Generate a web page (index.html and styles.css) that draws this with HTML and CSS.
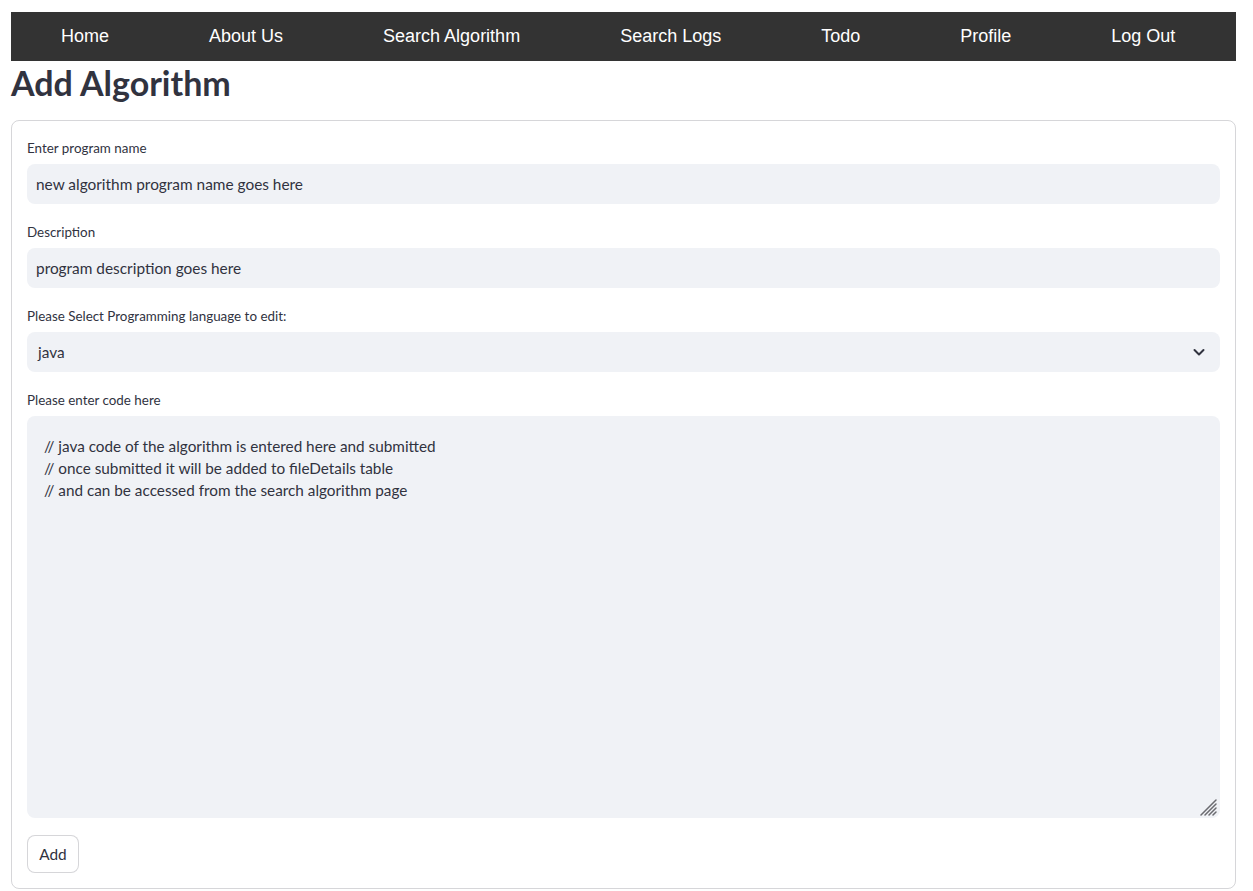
FILE: index.html
```html
<!DOCTYPE html>
<html lang="en">
<head>
<meta charset="utf-8">
<title>Add Algorithm</title>
<link rel="stylesheet" href="styles.css">
</head>
<body>
<div class="page">
  <nav class="topnav">
    <a class="nav-item" href="#">Home</a>
    <a class="nav-item" href="#">About Us</a>
    <a class="nav-item" href="#">Search Algorithm</a>
    <a class="nav-item" href="#">Search Logs</a>
    <a class="nav-item" href="#">Todo</a>
    <a class="nav-item" href="#">Profile</a>
    <a class="nav-item" href="#">Log Out</a>
  </nav>
  <h1 class="title">Add Algorithm</h1>
  <form class="form-box">
    <div class="field">
      <label class="field-label">Enter program name</label>
      <input class="text-input" type="text" value="new algorithm program name goes here">
    </div>
    <div class="field">
      <label class="field-label">Description</label>
      <input class="text-input" type="text" value="program description goes here">
    </div>
    <div class="field">
      <label class="field-label">Please Select Programming language to edit:</label>
      <div class="select">
        <span class="select-value">java</span>
        <svg class="chevron" width="14" height="14" viewBox="0 0 14 14"><polyline points="2.5,5 7,9.5 11.5,5" fill="none" stroke="#31333f" stroke-width="2" stroke-linecap="round" stroke-linejoin="round"/></svg>
      </div>
    </div>
    <div class="field">
      <label class="field-label">Please enter code here</label>
      <div class="code-wrap">
        <textarea class="code-area">// java code of the algorithm is entered here and submitted
// once submitted it will be added to fileDetails table
// and can be accessed from the search algorithm page</textarea>
        <svg class="grip" width="17" height="17" viewBox="0 0 17 17"><g stroke="#6b6b70" stroke-width="1.5" stroke-linecap="round"><line x1="1" y1="16" x2="16" y2="1"/><line x1="5" y1="16" x2="16" y2="5"/><line x1="9" y1="16" x2="16" y2="9"/><line x1="13" y1="16" x2="16" y2="13"/></g></svg>
      </div>
    </div>
    <div class="actions">
      <button class="btn" type="button">Add</button>
    </div>
  </form>
</div>
</body>
</html>
```

FILE: styles.css
```css
* { box-sizing: border-box; }

body {
  margin: 0;
  background: #ffffff;
  color: #31333f;
  font-family: Lato, "Noto Sans", sans-serif;
}

.page {
  padding: 12px 17px 0 11px;
}

.topnav {
  display: flex;
  height: 49px;
  background: #333333;
}

.nav-item {
  display: block;
  padding: 0 50px;
  line-height: 49px;
  font-family: "Liberation Sans", Arial, sans-serif;
  font-size: 18px;
  color: #ffffff;
  text-decoration: none;
}

.title {
  margin: 0;
  padding: 0;
  height: 59px;
  font-size: 34px;
  line-height: 44px;
  font-weight: 700;
  color: #31333f;
}

.form-box {
  display: flex;
  flex-direction: column;
  gap: 18px;
  border: 1px solid rgba(49, 51, 63, 0.2);
  border-radius: 8px;
  padding: 17px 15px 14px 15px;
  min-height: 769px;
}

.field {
  display: flex;
  flex-direction: column;
}

.field-label {
  font-size: 13.4px;
  line-height: 20px;
  height: 26px;
  padding-top: 0;
  color: #31333f;
}

.text-input {
  height: 40px;
  border: none;
  border-radius: 8px;
  background: #f0f2f6;
  padding: 0 9px;
  font-family: Lato, "Noto Sans", sans-serif;
  font-size: 15.4px;
  color: #31333f;
  outline: none;
}

.select {
  display: flex;
  align-items: center;
  justify-content: space-between;
  height: 40px;
  border-radius: 8px;
  background: #f0f2f6;
  padding: 0 14px 0 11px;
  font-size: 15.4px;
}

.chevron { display: block; }

.code-wrap {
  position: relative;
  display: flex;
}

.code-area {
  flex: 1;
  height: 402px;
  border: none;
  border-radius: 8px;
  background: #f0f2f6;
  padding: 19px 16px 16px 17px;
  font-family: Lato, "Noto Sans", sans-serif;
  font-size: 15.3px;
  line-height: 22px;
  color: #31333f;
  resize: none;
  outline: none;
}

.grip {
  position: absolute;
  right: 3px;
  bottom: 2px;
}

.actions {
  margin-top: -1px;
}

.btn {
  height: 38px;
  width: 52px;
  padding: 0;
  border: 1px solid rgba(49, 51, 63, 0.2);
  border-radius: 8px;
  background: #ffffff;
  font-family: Lato, "Noto Sans", sans-serif;
  font-size: 15.4px;
  color: #31333f;
}
```
